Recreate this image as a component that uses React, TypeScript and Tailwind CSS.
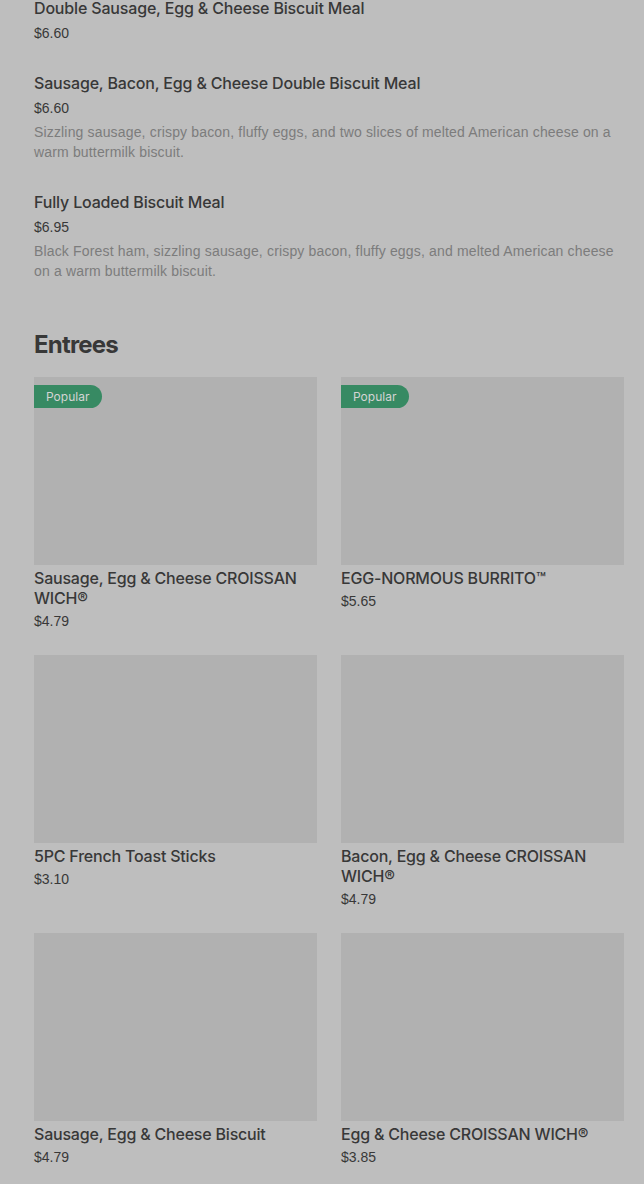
import React from 'react';

interface MenuItem {
  name: string;
  price: string;
  description?: string;
}

interface Entree {
  name: string;
  price: string;
  popular?: boolean;
}

const menuItems: MenuItem[] = [
  { name: 'Double Sausage, Egg & Cheese Biscuit Meal', price: '$6.60' },
  {
    name: 'Sausage, Bacon, Egg & Cheese Double Biscuit Meal',
    price: '$6.60',
    description:
      'Sizzling sausage, crispy bacon, fluffy eggs, and two slices of melted American cheese on a warm buttermilk biscuit.',
  },
  {
    name: 'Fully Loaded Biscuit Meal',
    price: '$6.95',
    description:
      'Black Forest ham, sizzling sausage, crispy bacon, fluffy eggs, and melted American cheese on a warm buttermilk biscuit.',
  },
];

const entrees: Entree[] = [
  { name: 'Sausage, Egg & Cheese CROISSAN WICH®', price: '$4.79', popular: true },
  { name: 'EGG-NORMOUS BURRITO™', price: '$5.65', popular: true },
  { name: '5PC French Toast Sticks', price: '$3.10' },
  { name: 'Bacon, Egg & Cheese CROISSAN WICH®', price: '$4.79' },
  { name: 'Sausage, Egg & Cheese Biscuit', price: '$4.79' },
  { name: 'Egg & Cheese CROISSAN WICH®', price: '$3.85' },
];

// titles use Inter, body text uses Liberation Sans (closer widths to the source font)
const titleFont = { fontFamily: 'Inter, "Liberation Sans", sans-serif' };

const MenuRow: React.FC<{ item: MenuItem }> = ({ item }) => (
  <div className="flex flex-col">
    <div style={titleFont} className="text-[16px] leading-[24px] font-medium tracking-[-0.17px] text-[#383838]">
      {item.name}
    </div>
    <div className="mt-[3px] text-[14px] leading-[20px] text-[#383838]">{item.price}</div>
    {item.description && (
      <div className="mt-[4px] text-[14px] leading-[20px] tracking-[0.16px] text-[#7c7c7c]">{item.description}</div>
    )}
  </div>
);

const EntreeCard: React.FC<{ item: Entree }> = ({ item }) => (
  <div className="flex flex-col">
    <div className="relative h-[188px] bg-[#b1b1b1]">
      {item.popular && (
        <span
          style={titleFont}
          className="absolute left-0 top-[8px] h-[23px] pl-[12px] pr-[13px] rounded-r-full bg-[#378a63] text-[12px] leading-[23px] text-[#d4d4d4]"
        >
          Popular
        </span>
      )}
    </div>
    <div style={titleFont} className="mt-[3px] text-[16px] leading-[20px] font-medium tracking-[-0.2px] text-[#383838]">
      {item.name}
    </div>
    <div className="mt-[3px] text-[14px] leading-[20px] text-[#383838]">{item.price}</div>
  </div>
);

export default function App() {
  return (
    <div
      className="h-[1184px] overflow-hidden bg-[#bebebe] pl-[34px] pr-[20px]"
      style={{ fontFamily: '"Liberation Sans", Arial, sans-serif' }}
    >
      <div className="-mt-[4px] flex flex-col gap-[28px]">
        {menuItems.map((item) => (
          <MenuRow key={item.name} item={item} />
        ))}
      </div>
      <h2 style={titleFont} className="mt-[48px] text-[24px] leading-[32px] font-bold tracking-[-0.8px] text-[#383838]">
        Entrees
      </h2>
      <div className="mt-[16px] grid grid-cols-2 gap-x-[24px] gap-y-[24px]">
        {entrees.map((item) => (
          <EntreeCard key={item.name} item={item} />
        ))}
      </div>
    </div>
  );
}
